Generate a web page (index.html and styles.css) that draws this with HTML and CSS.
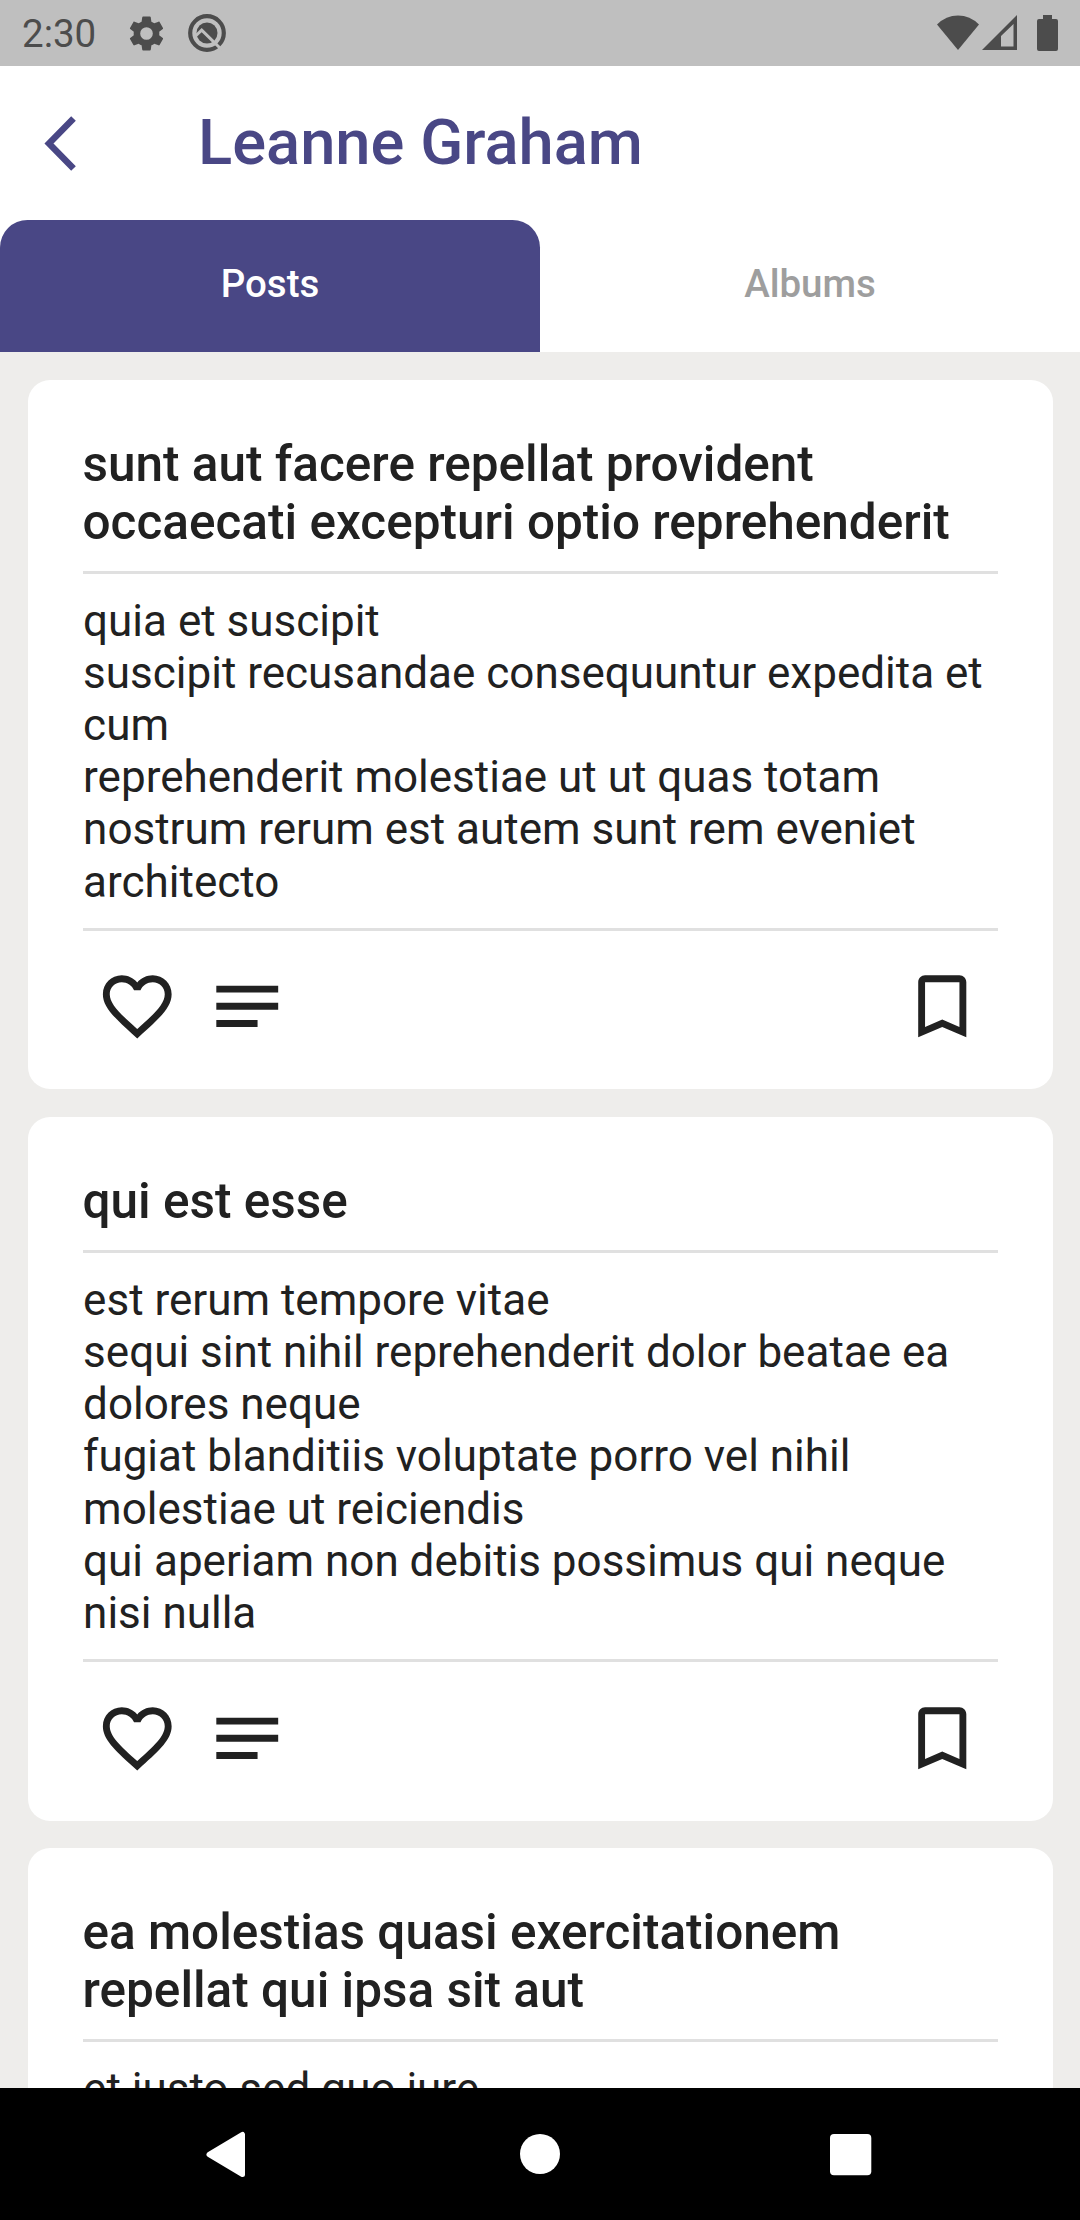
FILE: index.html
```html
<!DOCTYPE html>
<html lang="en">
<head>
<meta charset="utf-8">
<title>Leanne Graham</title>
<link rel="stylesheet" href="styles.css">
</head>
<body>
<svg class="defs" aria-hidden="true">
  <symbol id="heart" viewBox="0 0 24 24"><path d="M16.5 3c-1.74 0-3.41.81-4.5 2.09C10.91 3.81 9.24 3 7.5 3 4.42 3 2 5.42 2 8.5c0 3.78 3.4 6.86 8.55 11.54L12 21.35l1.45-1.32C18.6 15.36 22 12.28 22 8.500 22 5.420 19.580 3 16.500 3zm-4.400 15.550l-.1.1-.1-.1C7.140 14.240 4 11.390 4 8.500 4 6.500 5.500 5 7.500 5c1.540 0 3.040.99 3.570 2.360h1.870C13.460 5.990 14.960 5 16.500 5c2 0 3.500 1.500 3.500 3.500 0 2.890-3.140 5.740-7.900 10.050z"/></symbol>
  <symbol id="notes" viewBox="0 0 24 24"><path d="M3 18h12v-2H3v2zM3 6v2h18V6H3zm0 7h18v-2H3v2z"/></symbol>
  <symbol id="bookmark" viewBox="0 0 24 24"><path d="M17 3H7c-1.100 0-1.990.9-1.990 2L5 21l7-3 7 3V5c0-1.100-.9-2-2-2zm0 15l-5-2.180L7 18V5h10v13z"/></symbol>
</svg>
<div class="screen">
  <header class="status">
    <span class="clock">2:30</span>
    <svg class="gear" viewBox="0 0 24 24"><path d="M19.430 12.980c.04-.32.070-.64.070-.98s-.03-.66-.07-.98l2.110-1.650c.19-.15.24-.42.12-.64l-2-3.460c-.12-.22-.39-.3-.61-.22l-2.490 1c-.52-.4-1.080-.73-1.690-.98l-.38-2.650C14.460 2.180 14.250 2 14 2h-4c-.25 0-.46.18-.49.42l-.38 2.650c-.61.25-1.170.59-1.690.98l-2.490-1c-.23-.09-.49 0-.61.22l-2 3.460c-.13.22-.07.49.12.64l2.110 1.650c-.04.32-.07.65-.07.98s.03.66.07.98l-2.110 1.650c-.19.15-.24.42-.12.64l2 3.460c.12.22.39.3.61.22l2.490-1c.52.4 1.080.73 1.690.98l.38 2.650c.03.24.24.42.49.42h4c.25 0 .46-.18.49-.42l.38-2.650c.61-.25 1.170-.59 1.690-.98l2.490 1c.23.09.49 0 .61-.22l2-3.460c.12-.22.070-.49-.12-.64l-2.110-1.650zM12 15.700a3.700 3.700 0 1 1 0-7.400 3.700 3.700 0 0 1 0 7.400z"/></svg>
    <svg class="quick" viewBox="0 0 38 38"><circle cx="19" cy="19" r="16.800" fill="none" stroke="#4c4c4c" stroke-width="4.200"/><circle cx="19" cy="19" r="10.500"/><path d="M7 22.500l6.700-6.300L34 36" fill="none" stroke="#bfbfbf" stroke-width="3"/></svg>
    <span class="spacer"></span>
    <svg class="wifi" viewBox="0 0 42 35"><path d="M0 9.500Q9 .5 21 .5t21 9L21 35z"/></svg>
    <svg class="signal" viewBox="0 0 35 35"><path d="M35 0v35H0zM31.500 9L19 21v10.500h12.500z" fill-rule="evenodd"/></svg>
    <svg class="battery" viewBox="0 0 21 36"><path d="M6 0h9v4h4q2 0 2 2v28q0 2-2 2H2q-2 0-2-2V6q0-2 2-2h4z"/></svg>
  </header>
  <div class="appbar">
    <svg class="back" viewBox="0 0 32 55"><path d="M29.500 2.500L5 27.500 29.500 52.500" fill="none" stroke="#494785" stroke-width="6.500"/></svg>
    <h1 class="name">Leanne Graham</h1>
  </div>
  <nav class="tabs"><a class="tab active">Posts</a><a class="tab">Albums</a></nav>
  <main class="feed">
    <article class="card">
      <h2 class="title">sunt aut facere repellat provident
occaecati excepturi optio reprehenderit</h2>
      <hr class="rule">
      <p class="text">quia et suscipit
suscipit recusandae consequuntur expedita et
cum
reprehenderit molestiae ut ut quas totam
nostrum rerum est autem sunt rem eveniet
architecto</p>
      <hr class="rule">
      <div class="actions"><svg class="icon"><use href="#heart"/></svg><svg class="icon"><use href="#notes"/></svg><svg class="icon save"><use href="#bookmark"/></svg></div>
    </article>
    <article class="card">
      <h2 class="title">qui est esse</h2>
      <hr class="rule">
      <p class="text">est rerum tempore vitae
sequi sint nihil reprehenderit dolor beatae ea
dolores neque
fugiat blanditiis voluptate porro vel nihil
molestiae ut reiciendis
qui aperiam non debitis possimus qui neque
nisi nulla</p>
      <hr class="rule">
      <div class="actions"><svg class="icon"><use href="#heart"/></svg><svg class="icon"><use href="#notes"/></svg><svg class="icon save"><use href="#bookmark"/></svg></div>
    </article>
    <article class="card">
      <h2 class="title">ea molestias quasi exercitationem
repellat qui ipsa sit aut</h2>
      <hr class="rule">
      <p class="text">et iusto sed quo iure</p>
    </article>
  </main>
  <footer class="navbar">
    <svg class="nav" viewBox="0 0 48 48"><path d="M36.500 4.500v40L3 24.500z" fill="#fff" stroke="#fff" stroke-width="5" stroke-linejoin="round"/></svg>
    <svg class="nav" viewBox="0 0 48 48"><circle cx="24" cy="24" r="20" fill="#fff"/></svg>
    <svg class="nav" viewBox="0 0 48 48"><rect x="4" y="4" width="41.300" height="41.300" rx="4" fill="#fff"/></svg>
  </footer>
</div>
</body>
</html>
```
FILE: styles.css
```css
* { box-sizing: border-box; }
body { margin: 0; font-family: Roboto, sans-serif; color: #212121; }
h1, h2, p, hr { margin: 0; }
.defs { display: none; }
.screen { width: 1080px; height: 2220px; display: flex; flex-direction: column; overflow: hidden; background: #fff; }
.status { height: 66px; flex: none; display: flex; align-items: center; padding: 0 22px; background: #bfbfbf; color: #4c4c4c; fill: #4c4c4c; }
.clock { width: 104px; font-size: 38.500px; line-height: 66px; padding-top: 2px; }
.gear { width: 41px; height: 41px; }
.quick { width: 38px; height: 38px; margin-left: 21px; }
.spacer { flex: 1; }
.wifi { width: 42px; height: 35px; margin-bottom: 1px; }
.signal { width: 35px; height: 35px; margin-left: 3px; margin-bottom: 1px; }
.battery { width: 21px; height: 36px; margin-left: 20px; }
.appbar { height: 154px; flex: none; display: flex; align-items: center; padding-left: 44px; color: #494785; }
.back { width: 32px; height: 55px; }
.name { margin: 0 0 2px 122px; font-size: 63.250px; font-weight: 500; line-height: 74px; }
.tabs { height: 132px; flex: none; display: flex; }
.tab { flex: 1; display: flex; align-items: center; justify-content: center; padding-bottom: 6px; font-size: 38.500px; font-weight: 500; color: #9e9e9e; }
.tab.active { background: #494785; color: #fff; border-radius: 27.500px 27.500px 0 0; }
.feed { flex: 1; min-height: 0; overflow: hidden; display: flex; flex-direction: column; gap: 27.500px; padding: 27.500px; background: #eeedeb; }
.card { flex: none; padding: 55px 55px 27.500px; border-radius: 22px; background: #fff; }
.title { font-size: 49.500px; font-weight: 500; line-height: 58px; white-space: pre; }
.text { padding-left: 0.600px; font-size: 44px; line-height: 52.200px; white-space: pre; }
.rule { height: 3px; border: 0; margin: 20px 0 21px; background: #e0e0e0; }
.actions { height: 110px; display: flex; align-items: center; padding: 0 13.750px; gap: 27.500px; }
.icon { width: 82.500px; height: 82.500px; fill: #212121; }
.save { margin-left: auto; }
.navbar { height: 132px; flex: none; display: flex; align-items: center; justify-content: center; gap: 262px; background: #000; }
.nav { width: 48px; height: 48px; }
```
